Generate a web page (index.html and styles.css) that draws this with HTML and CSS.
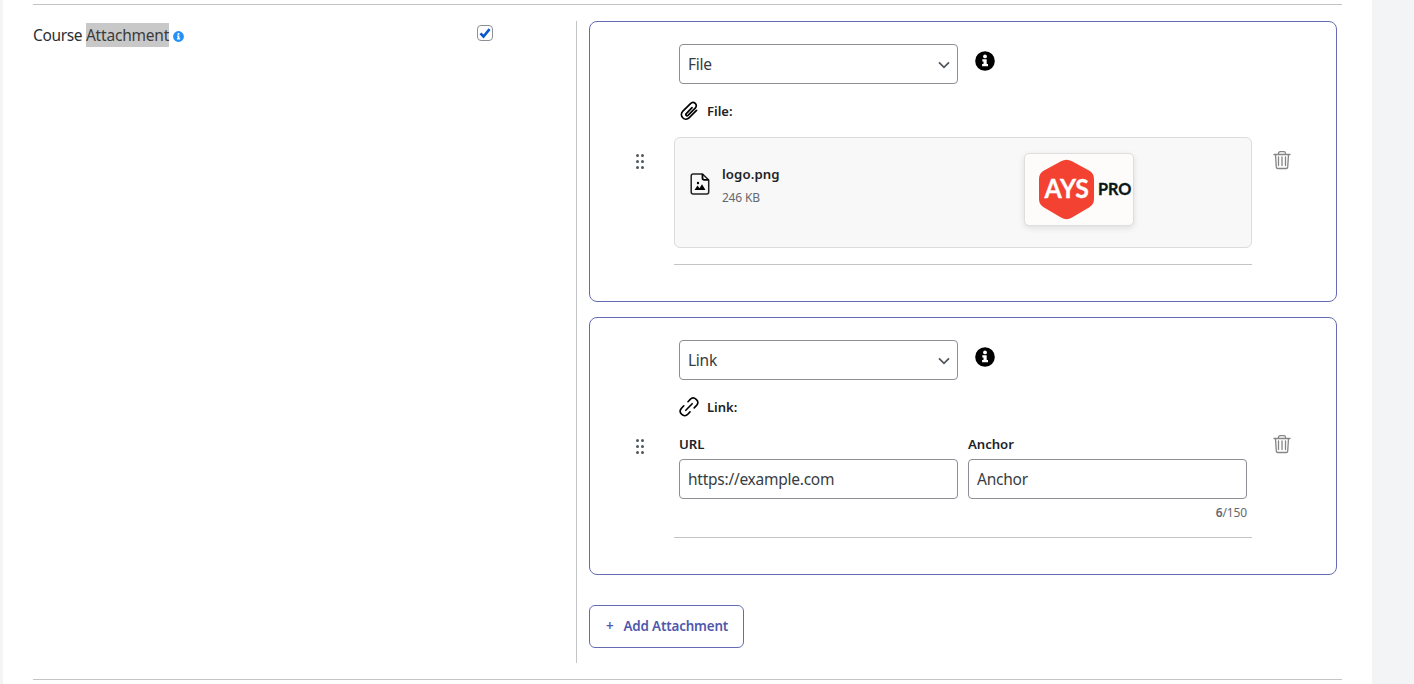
FILE: index.html
```html
<!DOCTYPE html>
<html lang="en">
<head>
<meta charset="utf-8">
<title>Course Attachment</title>
<link rel="stylesheet" href="styles.css">
</head>
<body>
<svg class="sprite" aria-hidden="true">
  <symbol id="info" viewBox="0 0 20 20">
    <circle cx="10" cy="10" r="9.8" fill="currentColor"/>
    <circle cx="10" cy="5.4" r="1.9" fill="#fff"/>
    <path d="M7.300 8.200h4.400v4.900h1.300v2.200H7.100v-2.200h1.400v-2.700H7.300z" fill="#fff"/>
  </symbol>
  <symbol id="grip" viewBox="0 0 10 16">
    <g fill="#50575e"><circle cx="2.500" cy="1.500" r="1.500"/><circle cx="7.500" cy="1.500" r="1.500"/><circle cx="2.500" cy="7.500" r="1.500"/><circle cx="7.500" cy="7.500" r="1.500"/><circle cx="2.500" cy="13.500" r="1.500"/><circle cx="7.500" cy="13.500" r="1.500"/></g>
  </symbol>
  <symbol id="trash" viewBox="0 0 18 20">
    <g fill="none" stroke="#858585" stroke-width="1.300" stroke-linecap="round" stroke-linejoin="round"><path d="M1 4.500h16M2.500 4.600l.8 12.500q.1 1.400 1.500 1.400h8.400q1.400 0 1.500-1.400l.8-12.500M5.500 4.200V3.500q0-1.800 1.800-1.800h3.400q1.800 0 1.800 1.800v.7"/><path d="M5.500 7v8.500M9 7v8.500M12.500 7v8.500"/></g>
  </symbol>
</svg>
<main class="panel">
  <section class="setting">
    <div class="setting-label">
      <div class="label-text"><span class="label-word">Course </span><span class="selected">Attachment</span><svg class="info-small"><use href="#info"/></svg></div>
      <span class="checkbox"><svg viewBox="0 0 14 14"><path d="M2.500 7.300l3 3.200L11.600 3.200" fill="none" stroke="#0a58ca" stroke-width="2.600"/></svg></span>
    </div>
    <div class="attachments">
      <article class="card card-file">
        <div class="grip"><svg><use href="#grip"/></svg></div>
        <div class="content">
          <div class="type-row">
            <div class="field select"><span>File</span><svg viewBox="0 0 12 8"><path d="M1 1.300l5 5 5-5" fill="none" stroke="#50575e" stroke-width="1.800"/></svg></div>
            <svg class="info-large"><use href="#info"/></svg>
          </div>
          <div class="kind">
            <svg viewBox="0 0 20 20"><path d="M13 6.700L7.300 12.600c-1.200 1.300.4 2.900 1.700 1.700l7.200-7.200c3.200-3.300-1.500-7.700-4.700-4.500L3.900 10.200c-4.400 4.500 1.900 10.800 6.400 6.400l7.200-7.200" fill="none" stroke="#000" stroke-width="1.700" stroke-linecap="round"/></svg>
            <span>File:</span>
          </div>
          <div class="file-box">
            <svg class="file-icon" viewBox="0 0 20 22"><path d="M12.500 1H3.200Q1.200 1 1.200 3v16q0 2 2 2h13.500q2 0 2-2V7z" fill="none" stroke="#222" stroke-width="1.500" stroke-linejoin="round"/><path d="M12.500 1v4.200q0 1.700 1.700 1.700h4.500" fill="none" stroke="#000" stroke-width="1.800"/><path d="M4.500 17l3-4.500 2 2.700 2.500-3.900 3.500 5.700z"/><circle cx="8" cy="10" r="1.200"/></svg>
            <div class="file-info"><strong>logo.png</strong><span>246 KB</span></div>
            <div class="preview"><svg viewBox="0 0 108 71"><path d="M36 7.200q5.500-3 11 0l17 9.400q5 2.700 5 8.400v20q0 5.700-5 8.400l-17 10q-5.500 3.600-11 0l-17-10q-5-2.700-5-8.400V25q0-5.700 5-8.400z" fill="#f44232"/><text x="19.500" y="44" textLength="44.500" lengthAdjust="spacingAndGlyphs" class="logo-ays">AYS</text><text x="73" y="40.500" textLength="33.500" lengthAdjust="spacingAndGlyphs" class="logo-pro">PRO</text></svg></div>
          </div>
          <hr>
        </div>
        <div class="trash"><svg><use href="#trash"/></svg></div>
      </article>
      <article class="card card-link">
        <div class="grip"><svg><use href="#grip"/></svg></div>
        <div class="content">
          <div class="type-row">
            <div class="field select"><span>Link</span><svg viewBox="0 0 12 8"><path d="M1 1.300l5 5 5-5" fill="none" stroke="#50575e" stroke-width="1.800"/></svg></div>
            <svg class="info-large"><use href="#info"/></svg>
          </div>
          <div class="kind">
            <svg viewBox="0 0 20 20"><g fill="none" stroke="#000" stroke-width="1.600" stroke-linecap="round"><path d="M6.800 13.300l6.400-6.600"/><path d="M9 4.700l2.200-2.300c3.700-4 10.100 1.800 6.400 6l-2.400 2.500"/><path d="M11 14.900l-2.200 2.400c-3.700 4.100-10.200-1.700-6.400-5.900l2.400-2.600"/></g></svg>
            <span>Link:</span>
          </div>
          <div class="inputs">
            <div><div class="caption">URL</div><div class="field"><span class="url">https://example.com</span></div></div>
            <div><div class="caption">Anchor</div><div class="field"><span>Anchor</span></div><div class="count"><b>6</b>/150</div></div>
          </div>
          <hr>
        </div>
        <div class="trash"><svg><use href="#trash"/></svg></div>
      </article>
      <div class="add"><span class="plus">+</span><span>Add Attachment</span></div>
    </div>
  </section>
</main>
</body>
</html>
```
FILE: styles.css
```css
* { box-sizing: border-box; }
body { margin: 0; height: 684px; overflow: hidden; background: #f3f4f6; font: 15.5px/24px "Noto Sans", "Open Sans", sans-serif; letter-spacing: -.25px; color: #373d42; }
svg { display: block; flex: none; }
.sprite { display: none; }
.panel { height: 684px; margin: 0 42px 0 3px; padding: 4px 30px 0; background: #fff; }
.setting { height: 676px; border: solid #c3c4c7; border-width: 1px 0; padding: 16px 0; display: grid; grid-template-columns: 543px 1fr; }
.setting-label { display: flex; justify-content: space-between; padding-right: 83px; }
.label-text { display: flex; align-items: center; height: 24px; margin-top: 2px; white-space: pre; color: #292e33; letter-spacing: -.35px; }
.selected { background: #c8c8c8; color: #3c3c3c; letter-spacing: -.2px; }
.info-small { width: 11px; height: 11px; color: #2490f5; margin: 3px 0 0 4px; }
.checkbox { width: 16px; height: 16px; margin-top: 4px; border: 1px solid #8c8f94; border-radius: 4px; }
.checkbox svg { width: 14px; height: 14px; }
.attachments { height: 642px; border-left: 1px solid #c3c4c7; padding-left: 12px; }
.card { width: 748px; border: 1px solid #666cb4; border-radius: 8px; display: grid; grid-template-columns: 84px 578px 84px; }
.card-file { height: 281px; margin-bottom: 15px; }
.card-link { height: 258px; }
.grip { display: flex; align-items: center; justify-content: center; padding-left: 16px; }
.card-link .grip { padding-top: 2px; }
.grip svg { width: 10px; height: 16px; }
.content { padding-top: 22px; }
.type-row { display: flex; padding-left: 5px; gap: 17px; }
.field { width: 279px; height: 40px; border: 1px solid #8c8f94; border-radius: 4px; display: flex; align-items: center; padding: 0 8px; }
.select { justify-content: space-between; padding-right: 7px; }
.select svg { width: 12px; height: 8px; margin-top: 2px; }
.info-large { width: 20px; height: 20px; margin-top: 7px; color: #000; }
.kind { display: flex; align-items: center; gap: 8px; height: 24px; margin-top: 15px; padding-left: 5px; font-size: 13px; font-weight: 600; color: #1d2327; letter-spacing: 0; }
.kind svg { width: 20px; height: 20px; }
.file-box { height: 111px; margin-top: 14px; border: 1px solid #dcdcde; border-radius: 6px; background: #f8f8f8; display: grid; grid-template-columns: 47px 302px 110px; padding: 15px 0 0; }
.file-icon { width: 20px; height: 22px; margin: 20px 0 0 15px; }
.file-info { display: flex; flex-direction: column; padding-top: 9px; }
.file-info strong { font-size: 13.2px; font-weight: 600; color: #1d2327; letter-spacing: .1px; }
.file-info span { font-size: 12px; color: #646970; letter-spacing: -.3px; word-spacing: .5px; }
.preview { width: 110px; height: 73px; border: 1px solid #dedede; border-radius: 5px; background: #fdfcfa; box-shadow: 0 2px 6px #0000001c; letter-spacing: 0; }
.preview svg { width: 108px; height: 71px; overflow: visible; }
.logo-ays { font: 700 27px Lato, sans-serif; fill: #fff; stroke: #fff; stroke-width: .3px; }
.logo-pro { font: 700 17.500px Lato, sans-serif; fill: #091718; stroke: #091718; stroke-width: .3px; }
hr { height: 1px; border: 0; margin: 16px 0 0; background: #c3c4c7; }
.trash { display: flex; align-items: center; justify-content: center; width: 60px; height: 276px; }
.card-link .trash { height: 252px; }
.trash svg { width: 18px; height: 20px; }
.inputs { display: flex; gap: 10px; height: 102px; margin-top: 13px; padding-left: 5px; }
.caption { height: 27px; font-size: 13.200px; line-height: 24px; font-weight: 600; color: #1d2327; letter-spacing: -.05px; }
.count { text-align: right; font-size: 12px; line-height: 28px; color: #646970; letter-spacing: -.15px; }
.count b { font-weight: 600; }
.card-link hr { margin-top: 3px; }
.add { width: 155px; height: 43px; margin-top: 30px; border: 1px solid #666cb4; border-radius: 6px; display: flex; align-items: center; padding: 0 0 1px 16px; gap: 10px; color: #5058ac; font-weight: 600; font-size: 13.400px; letter-spacing: -.16px; white-space: nowrap; }
```
